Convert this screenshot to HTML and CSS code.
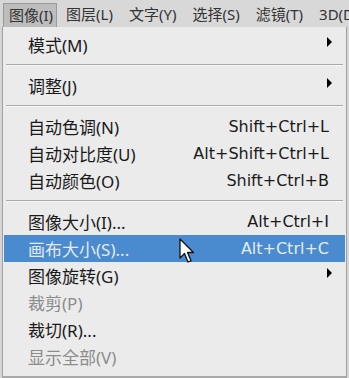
FILE: index.html
```html
<!DOCTYPE html>
<html lang="zh-CN">
<head>
    <meta charset="UTF-8">
    <title>图像菜单</title>
    <link rel="stylesheet" href="styles.css">
</head>
<body>
    <!-- Menu bar -->
    <div class="menubar">
        <span class="bar-item active">图像(I)</span>
        <span class="bar-item">图层(L)</span>
        <span class="bar-item">文字(Y)</span>
        <span class="bar-item">选择(S)</span>
        <span class="bar-item">滤镜(T)</span>
        <span class="bar-item">3D(D)</span>
    </div>

    <!-- Dropdown -->
    <div class="menu">
        <div class="row"><span class="label">模式(M)</span><span class="arrow"></span></div>
        <div class="sep"></div>
        <div class="row"><span class="label">调整(J)</span><span class="arrow"></span></div>
        <div class="sep"></div>
        <div class="row"><span class="label">自动色调(N)</span><span class="key">Shift+Ctrl+L</span></div>
        <div class="row"><span class="label">自动对比度(U)</span><span class="key">Alt+Shift+Ctrl+L</span></div>
        <div class="row"><span class="label">自动颜色(O)</span><span class="key">Shift+Ctrl+B</span></div>
        <div class="sep"></div>
        <div class="row"><span class="label">图像大小(I)...</span><span class="key">Alt+Ctrl+I</span></div>
        <div class="row selected">
            <span class="label">画布大小(S)...</span><span class="key">Alt+Ctrl+C</span>
            <svg class="cursor" width="16" height="26" viewBox="0 0 16 26">
                <path d="M1 1 L1 20 L5.5 15.5 L9 24 L12 22.8 L8.5 14.5 L14.5 14.5 Z" fill="#fff" stroke="#111" stroke-width="1.3" stroke-linejoin="round"/>
            </svg>
        </div>
        <div class="row"><span class="label">图像旋转(G)</span><span class="arrow"></span></div>
        <div class="row disabled"><span class="label">裁剪(P)</span></div>
        <div class="row"><span class="label">裁切(R)...</span></div>
        <div class="row disabled"><span class="label">显示全部(V)</span></div>
    </div>
</body>
</html>
```

FILE: styles.css
```css
/* Global */
body {
    margin: 0;
    width: 349px;
    height: 378px;
    overflow: hidden;
    background-color: #d6d6d6;
    font-family: 'Noto Sans', 'Noto Sans CJK SC', sans-serif;
    color: #1a1a1a;
}

/* Menu bar */
.menubar {
    height: 27px;
    display: flex;
    align-items: flex-end;
    padding-left: 3px;
    background-color: #d8d8d8;
    white-space: nowrap;
    overflow: hidden;
}
.bar-item {
    height: 24px;
    line-height: 23px;
    margin-right: 16px;
    font-size: 15px;
    color: #333;
    box-sizing: border-box;
}
.bar-item.active {
    background-color: #bdbdbd;
    border: 1px solid #9a9a9a;
    border-bottom: none;
    padding: 0 3px 0 5px;
    margin-right: 9px;
}

/* Dropdown */
.menu {
    margin-left: 2px;
    width: 345px;
    height: 351px;
    box-sizing: border-box;
    padding: 4px 1px 6px 1px;
    background-color: #ebebeb;
    border-left: 1px solid #a0a0a0;
    border-right: 1px solid #a0a0a0;
    border-bottom: 2px solid #a8a8a8;
}
.row {
    position: relative;
    height: 27px;
    display: flex;
    align-items: center;
    padding: 0 16px 0 24px;
    font-size: 17px;
    white-space: nowrap;
}
.row .label {
    flex: 1;
}
.row .key {
    font-family: 'DejaVu Sans', 'Noto Sans', sans-serif;
    font-size: 16px;
}
.row .arrow {
    width: 0;
    height: 0;
    margin-right: -3px;
    border-top: 5px solid transparent;
    border-bottom: 5px solid transparent;
    border-left: 5px solid #000;
    transform: translateY(-3px);
}
.row.selected {
    background-color: #4a8bcf;
    color: #e3eaf2;
}
.row.disabled {
    color: #8c8c8c;
}
.sep {
    height: 14px;
    display: flex;
    align-items: center;
}
.sep::before {
    content: '';
    flex: 1;
    height: 1px;
    margin: 0 2px;
    background-color: #a9a9a9;
    border-bottom: 1px solid #f8f8f8;
}

/* Mouse pointer over the selected row */
.cursor {
    position: absolute;
    left: 175px;
    top: 3px;
}
```
